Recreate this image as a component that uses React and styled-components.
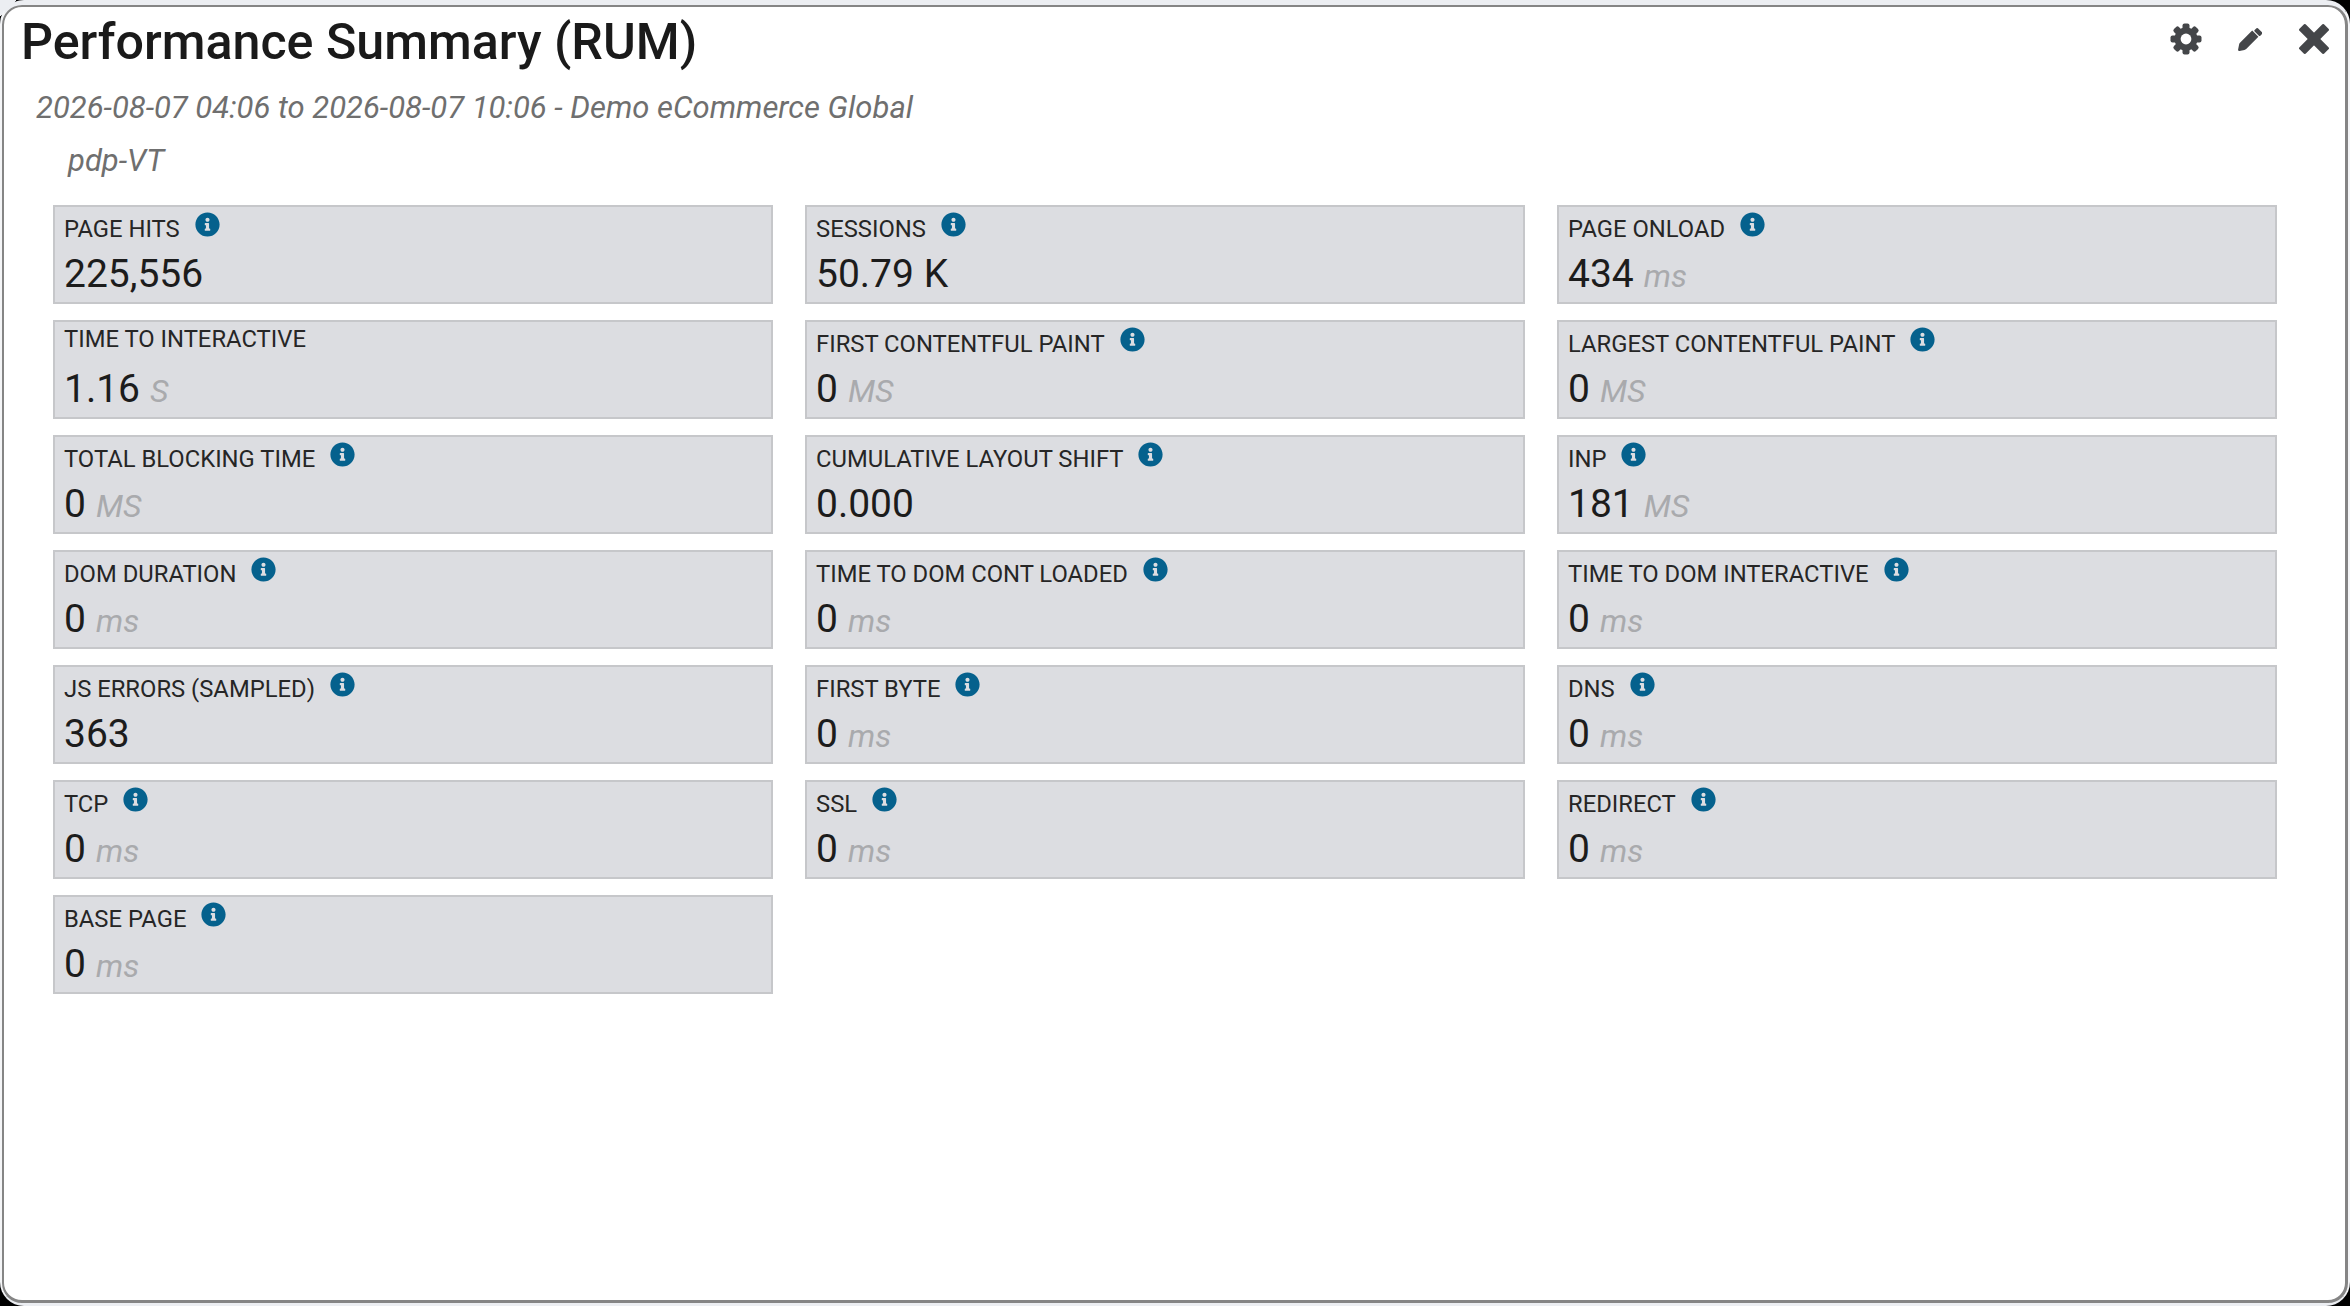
import React from 'react';
import styled, { createGlobalStyle } from 'styled-components';
import { FaInfoCircle } from 'react-icons/fa';

const GlobalStyle = createGlobalStyle`
  html, body {
    margin: 0;
    padding: 0;
    background: #000;
  }
  body {
    font-family: Roboto, "Liberation Sans", sans-serif;
  }
`;

const Backdrop = styled.div`
  width: 2350px;
  height: 1306px;
  background: linear-gradient(135deg, #eceef2 12px, #000 12px);
  overflow: hidden;
`;

const Frame = styled.div`
  width: 2350px;
  height: 1306px;
  box-sizing: border-box;
  border: 2px solid #f4f5f7;
  border-top: 5px solid #eceef2;
  border-bottom: 3px solid #eceef2;
  border-radius: 24px;
  background: #fff;
`;

const Panel = styled.div`
  height: 100%;
  box-sizing: border-box;
  border: 3px solid #858585;
  border-width: 2px 3px 3px 2px;
  border-radius: 20px;
  background: #fff;
  padding: 0 0 0 17px;
`;

const HeaderRow = styled.div`
  display: flex;
  justify-content: space-between;
  align-items: flex-start;
  height: 61px;
`;

const Title = styled.h1`
  margin: 0;
  padding-top: 6px;
  font-size: 50.2px;
  line-height: 58px;
  font-weight: 500;
  color: #1a1a1a;
`;

const Tools = styled.div`
  display: flex;
  align-items: center;
  padding: 16px 16px 0 0;
`;

const ToolIcon = styled.svg`
  display: block;
  margin-left: ${p => p.$gap}px;
  fill: #444649;
`;

const Subtitle = styled.div`
  margin: 22px 0 0 15px;
  font-size: 31px;
  line-height: 36px;
  font-style: italic;
  color: #6f6f6f;
`;

const Filter = styled.div`
  margin: 17px 0 0 47px;
  font-size: 31px;
  line-height: 36px;
  font-style: italic;
  color: #6f6f6f;
`;

const Grid = styled.div`
  display: grid;
  grid-template-columns: repeat(3, 720px);
  grid-auto-rows: 99px;
  column-gap: 32px;
  row-gap: 16px;
  margin: 26px 0 0 32px;
`;

const Card = styled.div`
  box-sizing: border-box;
  background: #dcdde1;
  border: 2px solid #c6c7ca;
  padding: ${p => (p.$plain ? '3px' : '8px')} 9px 0;
`;

const Label = styled.div`
  display: flex;
  align-items: flex-start;
  height: ${p => (p.$plain ? '41px' : '36px')};
  font-size: 23.8px;
  line-height: 28px;
  color: #262626;
`;

const Info = styled(FaInfoCircle)`
  margin: -3px 0 0 15px;
  font-size: 25px;
  color: #05618d;
`;

const Value = styled.div`
  font-size: 39px;
  line-height: 46px;
  color: #1c1c1c;
`;

const Unit = styled.span`
  margin-left: 10px;
  font-size: 32px;
  font-style: italic;
  color: #a9aaad;
`;

const metrics = [
  ['PAGE HITS', '225,556'],
  ['SESSIONS', '50.79 K'],
  ['PAGE ONLOAD', '434', 'ms'],
  ['TIME TO INTERACTIVE', '1.16', 'S', true],
  ['FIRST CONTENTFUL PAINT', '0', 'MS'],
  ['LARGEST CONTENTFUL PAINT', '0', 'MS'],
  ['TOTAL BLOCKING TIME', '0', 'MS'],
  ['CUMULATIVE LAYOUT SHIFT', '0.000'],
  ['INP', '181', 'MS'],
  ['DOM DURATION', '0', 'ms'],
  ['TIME TO DOM CONT LOADED', '0', 'ms'],
  ['TIME TO DOM INTERACTIVE', '0', 'ms'],
  ['JS ERRORS (SAMPLED)', '363'],
  ['FIRST BYTE', '0', 'ms'],
  ['DNS', '0', 'ms'],
  ['TCP', '0', 'ms'],
  ['SSL', '0', 'ms'],
  ['REDIRECT', '0', 'ms'],
  ['BASE PAGE', '0', 'ms'],
];

const GearIcon = () => (
  <ToolIcon width="32" height="32" viewBox="0 0 32 32">
    {[0, 45, 90, 135].map(angle => (
      <rect key={angle} x="12.5" y="0.5" width="7" height="31" rx="2" transform={`rotate(${angle} 16 16)`} />
    ))}
    <path fillRule="evenodd" d="M16 4.5a11.5 11.5 0 1 0 0 23 11.5 11.5 0 0 0 0-23zm0 6.5a5 5 0 1 1 0 10 5 5 0 0 1 0-10z" />
    <circle cx="16" cy="16" r="5.4" fill="#fff" />
  </ToolIcon>
);

// body and eraser are separate so the white slit between them shows
const PenIcon = () => (
  <ToolIcon $gap={36} width="24" height="24" viewBox="0 0 24 24">
    <path d="M14.2 3.6 20.4 9.8 8.2 22c-.5.5-1.1.8-1.8 1L1.6 24C.6 24.1-.1 23.4.1 22.4l1-4.8c.1-.7.4-1.3.9-1.8z" />
    <rect x="16.4" y="2.7" width="8" height="4.6" rx="1" transform="rotate(45 20.4 5)" />
  </ToolIcon>
);

const CloseIcon = () => (
  <ToolIcon $gap={37} width="30" height="30" viewBox="0 0 30 30">
    <rect x="-2.5" y="10.5" width="35" height="9" rx="1.5" transform="rotate(45 15 15)" />
    <rect x="-2.5" y="10.5" width="35" height="9" rx="1.5" transform="rotate(-45 15 15)" />
  </ToolIcon>
);

const MetricCard = ({ label, value, unit, plain }) => (
  <Card $plain={plain}>
    <Label $plain={plain}>
      {label}
      {!plain && <Info />}
    </Label>
    <Value>
      {value}
      {unit && <Unit>{unit}</Unit>}
    </Value>
  </Card>
);

const App = () => (
  <Backdrop>
    <GlobalStyle />
    <Frame>
      <Panel>
        <HeaderRow>
          <Title>Performance Summary (RUM)</Title>
          <Tools>
            <GearIcon />
            <PenIcon />
            <CloseIcon />
          </Tools>
        </HeaderRow>
        <Subtitle>2026-08-07 04:06 to 2026-08-07 10:06 - Demo eCommerce Global</Subtitle>
        <Filter>pdp-VT</Filter>
        <Grid>
          {metrics.map(([label, value, unit, plain]) => (
            <MetricCard key={label} label={label} value={value} unit={unit} plain={plain} />
          ))}
        </Grid>
      </Panel>
    </Frame>
  </Backdrop>
);

export default App;
